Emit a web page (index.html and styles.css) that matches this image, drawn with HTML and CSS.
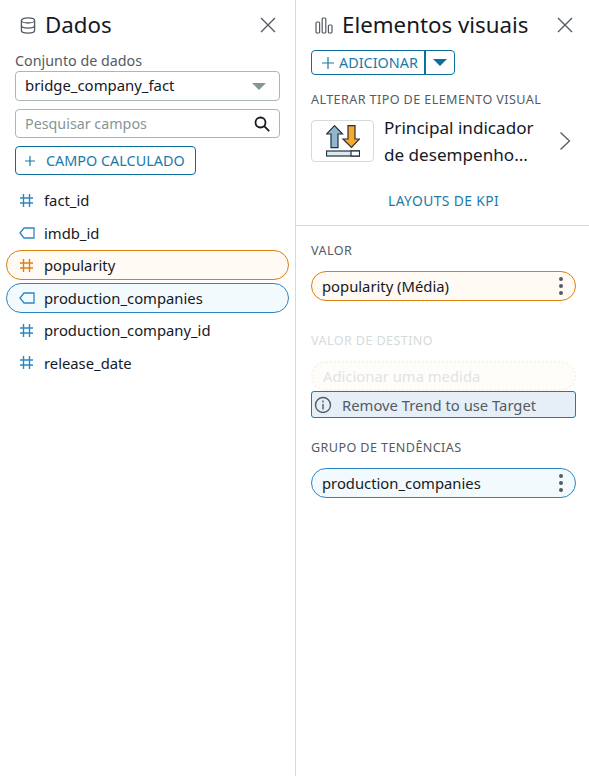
FILE: index.html
```html
<!DOCTYPE html>
<html lang="pt-BR">
<head>
  <meta charset="UTF-8">
  <meta name="viewport" content="width=device-width, initial-scale=1.0">
  <title>Dados e elementos visuais</title>
  <link rel="stylesheet" href="styles.css">
</head>
<body>

  <div class="panel panel-data">
    <div class="panel-header">
      <svg class="header-icon" width="16" height="17" viewBox="0 0 16 17" fill="none" stroke="#545b64" stroke-width="1.3">
        <ellipse cx="8" cy="3.400" rx="6.600" ry="2.600"/>
        <path d="M1.400 3.400v10.200c0 1.500 3 2.600 6.600 2.600s6.600-1.100 6.600-2.600V3.400"/>
        <path d="M1.400 8.500c0 1.500 3 2.600 6.600 2.600s6.600-1.100 6.600-2.600"/>
      </svg>
      <h2>Dados</h2>
      <svg class="close" width="16" height="16" viewBox="0 0 16 16" stroke="#545b64" stroke-width="1.4"><path d="M1 1l14 14M15 1L1 15"/></svg>
    </div>

    <label class="field-label">Conjunto de dados</label>
    <div class="select-box">
      <span>bridge_company_fact</span>
      <i class="select-arrow"></i>
    </div>
    <div class="search-box">
      <span>Pesquisar campos</span>
      <svg width="16" height="16" viewBox="0 0 16 16" fill="none" stroke="#16191f" stroke-width="1.8"><circle cx="6.500" cy="6.500" r="5"/><path d="M10.200 10.200l5 5"/></svg>
    </div>
    <button class="btn-calc">
      <svg class="plus" width="12" height="12" viewBox="0 0 12 12" stroke="#1a7ba8" stroke-width="1.200"><path d="M6 1v10M1 6h10"/></svg>
      CAMPO CALCULADO
    </button>

    <ul class="field-list">
      <li class="field">
        <svg class="hash" width="13" height="13" viewBox="0 0 13 13" stroke="#2e86c1" stroke-width="1.400"><path d="M3.500 0v13M9.500 0v13M0 4h13M0 9h13"/></svg>
        fact_id
      </li>
      <li class="field">
        <svg class="tag" width="16" height="12" viewBox="0 0 16 12" fill="none" stroke="#2e86c1" stroke-width="1.300"><path d="M5 1h10v10H5L1 6z"/></svg>
        imdb_id
      </li>
      <li class="field field-orange">
        <svg class="hash" width="13" height="13" viewBox="0 0 13 13" stroke="#df7f14" stroke-width="1.400"><path d="M3.500 0v13M9.500 0v13M0 4h13M0 9h13"/></svg>
        popularity
      </li>
      <li class="field field-blue">
        <svg class="tag" width="16" height="12" viewBox="0 0 16 12" fill="none" stroke="#2e86c1" stroke-width="1.300"><path d="M5 1h10v10H5L1 6z"/></svg>
        production_companies
      </li>
      <li class="field">
        <svg class="hash" width="13" height="13" viewBox="0 0 13 13" stroke="#2e86c1" stroke-width="1.400"><path d="M3.500 0v13M9.500 0v13M0 4h13M0 9h13"/></svg>
        production_company_id
      </li>
      <li class="field">
        <svg class="hash" width="13" height="13" viewBox="0 0 13 13" stroke="#2e86c1" stroke-width="1.400"><path d="M3.500 0v13M9.500 0v13M0 4h13M0 9h13"/></svg>
        release_date
      </li>
    </ul>
  </div>

  <div class="panel panel-visual">
    <div class="panel-top">
      <div class="panel-header">
        <svg class="header-icon" width="18" height="17" viewBox="0 0 18 17" fill="none" stroke="#545b64" stroke-width="1.200"><rect x="1" y="5" width="3.600" height="11" rx="1"/><rect x="7.200" y="1" width="3.600" height="15" rx="1"/><rect x="13.400" y="8" width="3.600" height="8" rx="1"/></svg>
        <h2>Elementos visuais</h2>
        <svg class="close" width="16" height="16" viewBox="0 0 16 16" stroke="#545b64" stroke-width="1.400"><path d="M1 1l14 14M15 1L1 15"/></svg>
      </div>

      <div class="btn-split">
        <div class="btn-add">
          <svg class="plus" width="12" height="12" viewBox="0 0 12 12" stroke="#1a7ba8" stroke-width="1.200"><path d="M6 0v12M0 6h12"/></svg>
          ADICIONAR
        </div>
        <div class="btn-drop"><i></i></div>
      </div>

      <div class="section-label">ALTERAR TIPO DE ELEMENTO VISUAL</div>
      <div class="visual-type">
        <div class="visual-thumb">
          <svg width="34" height="32" viewBox="0 0 34 32" stroke="#232f3e" stroke-width="1.200">
            <path d="M8.500 .7L16.500 9H12V22.700H5V9H.5z" fill="#8fb8cf"/>
            <path d="M22 .7h7V14h4.500l-8 8.500-8.500-8.500H22z" fill="#f7a928"/>
            <rect x=".5" y="26" width="33" height="5" fill="#dbe9f1"/>
            <rect x="25" y="26" width="8.500" height="5" fill="#fff"/>
          </svg>
        </div>
        <div class="visual-name">Principal indicador<br>de desempenho...</div>
        <svg class="chevron" width="12" height="20" viewBox="0 0 12 20" fill="none" stroke="#545b64" stroke-width="1.300"><path d="M1.500 1.500L10.500 10l-9 8.500"/></svg>
      </div>
      <div class="kpi-link">LAYOUTS DE KPI</div>
    </div>

    <div class="wells">
      <div class="section-label">VALOR</div>
      <div class="pill pill-orange"><span>popularity (Média)</span><span class="dots"><i></i><i></i><i></i></span></div>

      <div class="section-label label-off">VALOR DE DESTINO</div>
      <div class="pill pill-empty">Adicionar uma medida</div>
      <div class="notice">
        <svg width="18" height="18" viewBox="0 0 18 18" fill="none" stroke="#545b64" stroke-width="1.400"><circle cx="9" cy="9" r="7.500"/><path d="M9 8v5.500M9 4.500v2"/></svg>
        Remove Trend to use Target
      </div>

      <div class="section-label label-group">GRUPO DE TENDÊNCIAS</div>
      <div class="pill pill-blue"><span>production_companies</span><span class="dots"><i></i><i></i><i></i></span></div>
    </div>
  </div>

</body>
</html>
```

FILE: styles.css
```css
* {
  margin: 0;
  padding: 0;
  box-sizing: border-box;
}

body {
  font-family: "Noto Sans", sans-serif;
  background-color: #fff;
  color: #16191f;
  display: flex;
  height: 776px;
  overflow: hidden;
}

/* Paineis */
.panel-data {
  width: 295px;
  padding: 0 15px;
}

.panel-visual {
  width: 294px;
  border-left: 1px solid #d5dbdb;
}

.panel-top {
  padding: 0 13px 0 15px;
  height: 226px;
  border-bottom: 1px solid #d5dbdb;
}

.panel-header {
  display: flex;
  align-items: center;
  height: 50px;
}

.panel-header h2 {
  font-size: 22.300px;
  font-weight: 400;
  flex: 1;
  margin-top: -2px;
}

.panel-data .header-icon {
  margin: 0 9px 0 5px;
}

.panel-visual .header-icon {
  margin: 0 9px 0 4px;
}

.panel-data .close {
  margin-right: 4px;
}

.panel-visual .close {
  margin-right: 3px;
}

/* Campos do conjunto de dados */
.field-label {
  display: block;
  font-size: 14.300px;
  line-height: 21px;
  color: #545b64;
}

.select-box, .search-box {
  display: flex;
  align-items: center;
  justify-content: space-between;
  border: 1px solid #aab7b8;
  border-radius: 4px;
  padding: 0 9px;
  width: 265px;
}

.select-box {
  height: 30px;
  margin-bottom: 8px;
  font-size: 14.900px;
  padding-bottom: 2px;
}

.select-arrow {
  width: 0;
  height: 0;
  border-left: 7px solid transparent;
  border-right: 7px solid transparent;
  border-top: 7px solid #879596;
  margin: 2px 4px 0 0;
}

.search-box {
  height: 29px;
  margin-bottom: 8px;
  color: #879596;
  font-size: 14.300px;
}

.btn-calc {
  display: flex;
  align-items: center;
  height: 29px;
  width: 181px;
  border: 1px solid #0f6f9c;
  border-radius: 4px;
  background-color: #fff;
  color: #1a7ba8;
  font-family: inherit;
  font-size: 14.400px;
  padding-left: 8px;
}

.btn-calc .plus {
  margin-right: 10px;
}

/* Lista de campos */
.field-list {
  list-style: none;
  margin: 10.300px 0 0 -9px;
  width: 283px;
}

.field {
  display: flex;
  align-items: center;
  height: 30px;
  margin-bottom: 2.500px;
  border-radius: 15px;
  font-size: 14.800px;
  padding-left: 13px;
  border: 1px solid transparent;
}

.hash {
  margin-right: 11px;
}

.tag {
  margin: 0 9px 0 -1px;
}

.field-orange {
  background-color: #fffaf3;
  border-color: #d9800f;
}

.field-blue {
  background-color: #f2fafe;
  border-color: #2e86c1;
}

/* Elementos visuais */
.btn-split {
  display: flex;
  height: 25px;
  width: 144px;
  border: 1px solid #0f6f9c;
  border-radius: 4px;
  color: #1a7ba8;
  font-size: 14.400px;
}

.btn-add {
  display: flex;
  align-items: center;
  flex: 1;
  padding-left: 10px;
  border-right: 2px solid #0f6f9c;
}

.btn-add .plus {
  margin-right: 5px;
}

.btn-drop {
  width: 28px;
  display: flex;
  align-items: center;
  justify-content: center;
}

.btn-drop i {
  border-left: 7px solid transparent;
  border-right: 7px solid transparent;
  border-top: 7px solid #0f6f9c;
}

.section-label {
  font-size: 12.600px;
  line-height: 18px;
  color: #545b64;
  letter-spacing: 0.400px;
}

.panel-top .section-label {
  margin-top: 16px;
}

.visual-type {
  display: flex;
  align-items: center;
  margin-top: 5px;
}

.visual-thumb {
  width: 63px;
  height: 42px;
  border: 1px solid #d5dbdb;
  border-radius: 4px;
  display: flex;
  align-items: center;
  justify-content: center;
}

.visual-name {
  flex: 1;
  font-size: 17.100px;
  line-height: 27px;
  margin-left: 10px;
}

.chevron {
  margin-right: 5px;
}

.kpi-link {
  text-align: center;
  font-size: 13.800px;
  letter-spacing: 0.400px;
  color: #1a7ba8;
  margin-top: 23px;
}

.wells {
  padding: 16px 13px 0 15px;
}

.pill {
  display: flex;
  align-items: center;
  justify-content: space-between;
  height: 30px;
  border-radius: 15px;
  border: 1px solid transparent;
  font-size: 14.800px;
  padding: 0 10px;
  margin-top: 11px;
}

.pill-orange {
  background-color: #fffaf3;
  border-color: #d9800f;
}

.pill-blue {
  background-color: #f2fafe;
  border-color: #2e86c1;
}

.pill-empty {
  background-color: #fffdfa;
  border: 2px dotted #faf3e8;
  color: #dfe3e6;
}

.dots {
  display: flex;
  flex-direction: column;
  gap: 3px;
  margin-right: 2px;
}

.dots i {
  width: 4px;
  height: 4px;
  border-radius: 50%;
  background-color: #545b64;
}

.label-off {
  color: #d5dbdb;
  margin-top: 31px;
}

.notice {
  display: flex;
  align-items: center;
  gap: 10px;
  height: 27px;
  border: 1px solid #0f7fc4;
  border-radius: 3px;
  background-color: #e6eff7;
  color: #545b64;
  font-size: 14.800px;
  padding-left: 2px;
}

.label-group {
  margin-top: 21px;
}
```
